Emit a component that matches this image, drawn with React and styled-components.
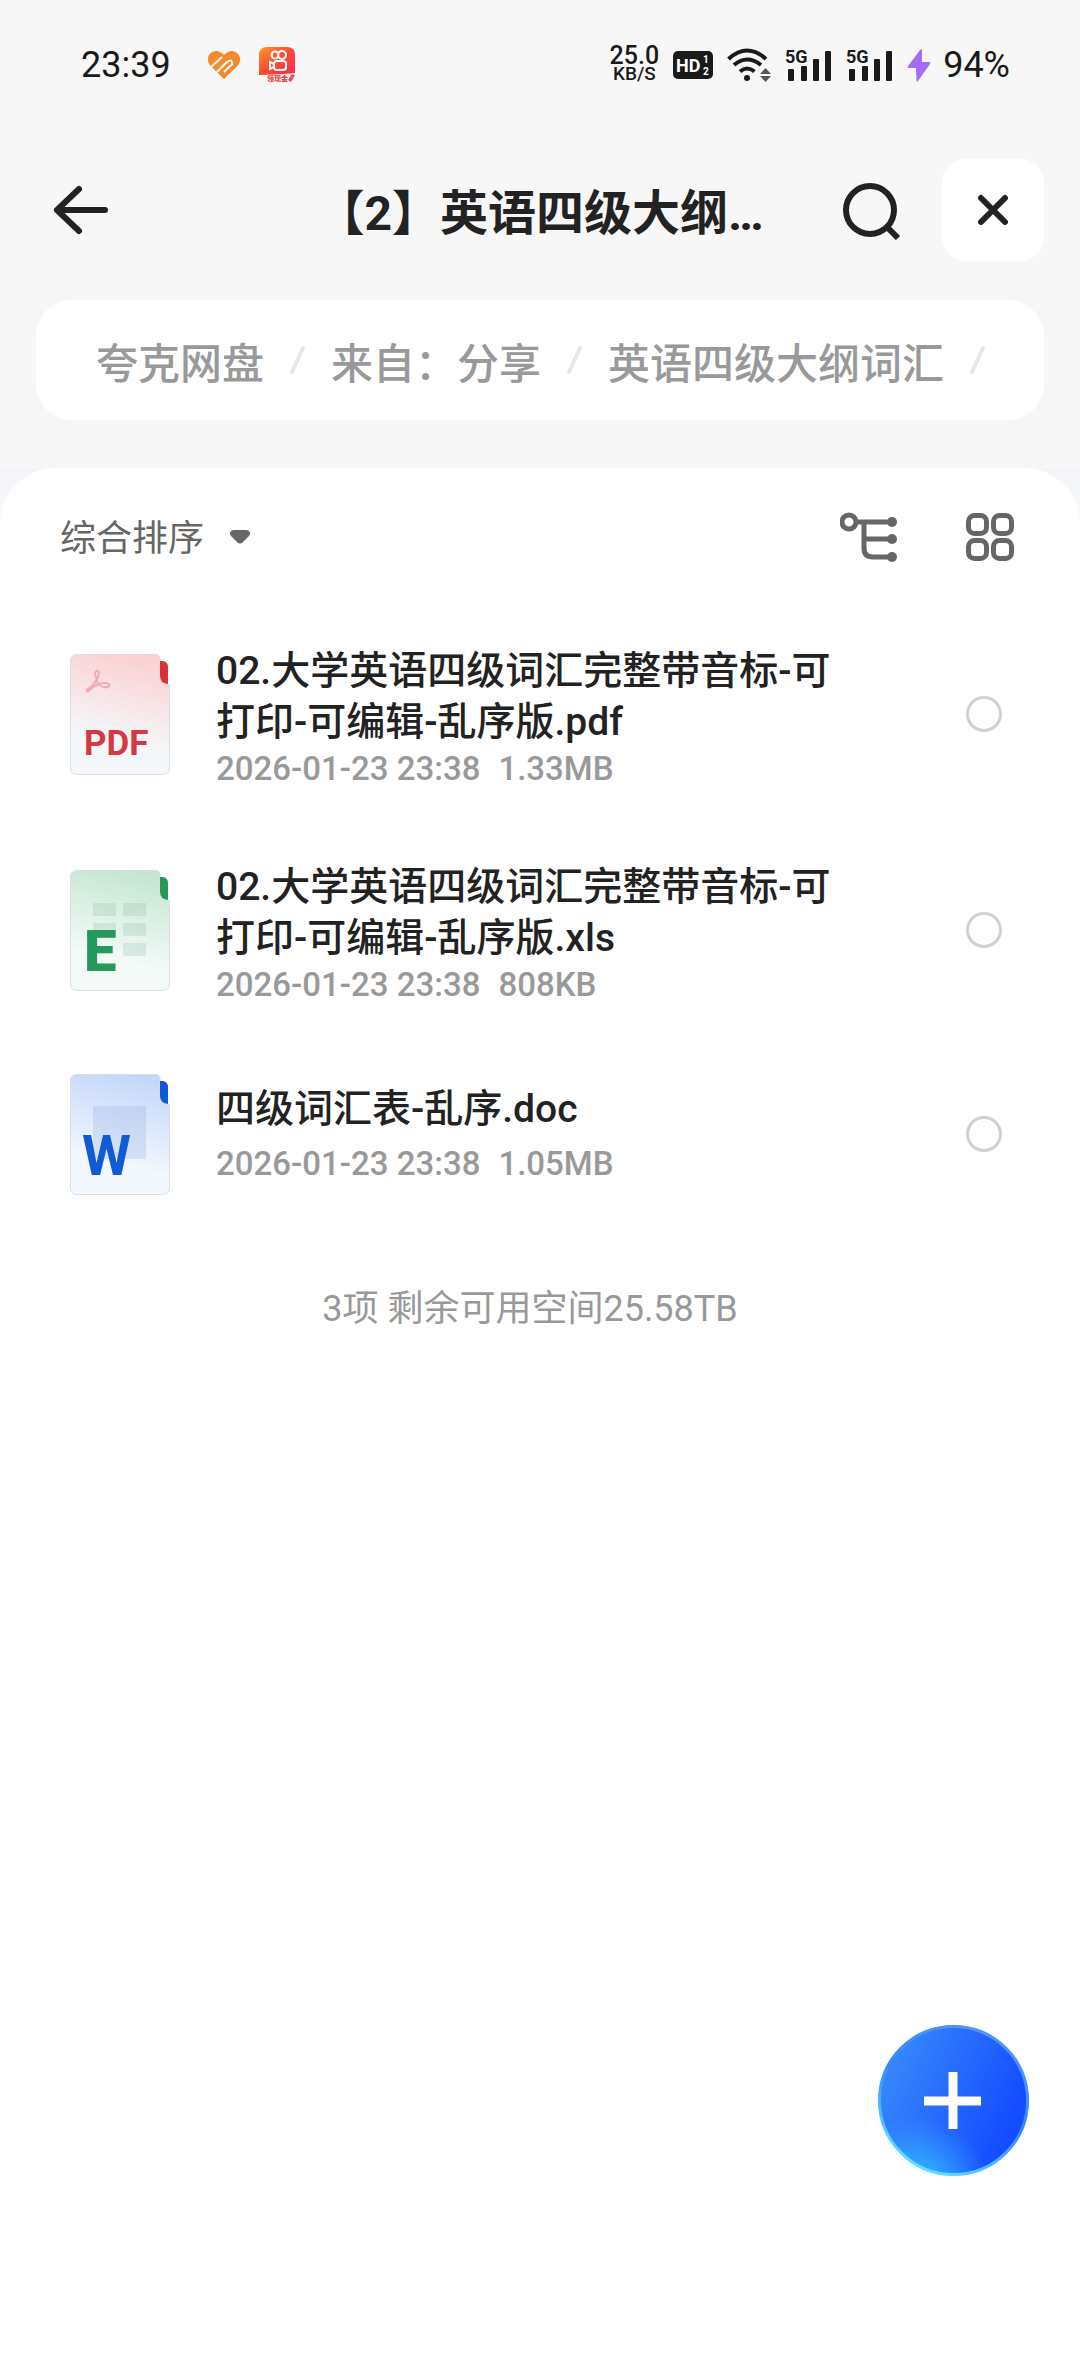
import React, { useState } from 'react';
import styled, { createGlobalStyle } from 'styled-components';

const GlobalStyle = createGlobalStyle`
  * {
    box-sizing: border-box;
  }
  body {
    margin: 0;
    background: #f7f7f7;
    color: #222;
    font-family: Roboto, "Noto Sans CJK SC", sans-serif;
  }
  button {
    padding: 0;
    border: 0;
    background: none;
    color: inherit;
    font: inherit;
    cursor: pointer;
  }
  svg {
    display: block;
    flex: none;
  }
`;

const Screen = styled.div`
  display: flex;
  flex-direction: column;
  min-height: 100vh;
`;

const StatusBar = styled.div`
  display: flex;
  align-items: center;
  justify-content: space-between;
  height: 130px;
  padding: 0 70px 0 81px;
  color: #1a1a1a;
  font-size: 36px;
`;

const StatusGroup = styled.div`
  display: flex;
  align-items: center;
`;

const Apps = styled.div`
  display: flex;
  align-items: center;
  gap: 18px;
  margin-left: 36px;
`;

const Speed = styled.div`
  margin-right: 14px;
  font-size: 25px;
  font-weight: 500;
  line-height: 18px;
  text-align: center;
`;

const SpeedUnit = styled.div`
  font-size: 19px;
  line-height: 18px;
`;

const StatusIcons = styled.div`
  display: flex;
  align-items: center;
  gap: 14px;
  margin-right: 12px;
`;

const Header = styled.header`
  display: grid;
  grid-template-columns: 1fr auto 1fr;
  align-items: center;
  height: 160px;
  padding: 0 36px;
`;

const BackButton = styled.button`
  justify-self: start;
  padding: 0 16px;
`;

const Title = styled.h1`
  margin: 0;
  padding-top: 8px;
  font-size: 48px;
  font-weight: 700;
  line-height: 56px;
  white-space: nowrap;
`;

const HeaderActions = styled.div`
  display: flex;
  align-items: center;
  justify-content: flex-end;
  gap: 40px;
`;

const CloseButton = styled.button`
  display: flex;
  align-items: center;
  justify-content: center;
  width: 102px;
  height: 102px;
  border-radius: 24px;
  background: #fff;
`;

const Breadcrumb = styled.nav`
  display: flex;
  align-items: center;
  gap: 26px;
  height: 120px;
  margin: 10px 36px 48px;
  padding: 0 60px;
  border-radius: 36px;
  background: #fff;
  overflow: hidden;
`;

const Crumb = styled.a`
  color: #999;
  font-size: 42px;
  font-weight: 500;
  text-decoration: none;
  white-space: nowrap;
`;

const SheetBack = styled.div`
  display: flex;
  flex: 1;
  background: linear-gradient(#f3f5f8, #fff 120px);
`;

const Sheet = styled.main`
  flex: 1;
  border-radius: 56px 56px 0 0;
  background: #fff;
`;

const Toolbar = styled.div`
  display: flex;
  align-items: center;
  justify-content: space-between;
  height: 138px;
  padding: 0 66px 0 60px;
  color: #666;
`;

const SortButton = styled.button`
  display: flex;
  align-items: center;
  gap: 26px;
  font-size: 36px;
`;

const SortLabel = styled.span`
  padding-bottom: 4px;
`;

const ViewButtons = styled.div`
  display: flex;
  gap: 68px;
`;

const FileList = styled.ul`
  margin: 0;
  padding: 0;
  list-style: none;
`;

const FileRow = styled.li`
  display: flex;
  align-items: center;
  height: ${({ $compact }) => ($compact ? 192 : 216)}px;
  padding: 0 78px 0 70px;
`;

const FileText = styled.label`
  flex: 1;
  margin: 0 120px 0 46px;
  padding-top: ${({ $compact }) => ($compact ? 0 : 8)}px;
`;

const FileName = styled.div`
  font-size: 39px;
  font-weight: 500;
  line-height: 51px;
  word-break: break-all;
`;

const FileMeta = styled.div`
  display: flex;
  gap: 18px;
  margin-top: ${({ $compact }) => ($compact ? 8 : 0)}px;
  color: #999;
  font-size: 33px;
  font-weight: 500;
  line-height: 42px;
`;

const Radio = styled.input`
  appearance: none;
  width: 36px;
  height: 36px;
  margin: 0;
  border: 3px solid #d0d0d0;
  border-radius: 50%;
  cursor: pointer;

  &:checked {
    border: 10px solid #1a66ff;
  }
`;

const Summary = styled.p`
  margin: 54px 20px 0 0;
  color: #999;
  font-size: 36px;
  line-height: 50px;
  text-align: center;
`;

const AddButton = styled.button`
  position: fixed;
  right: 51px;
  bottom: 200px;
  display: flex;
  align-items: center;
  justify-content: center;
  width: 151px;
  height: 151px;
`;

function HeartIcon() {
  return (
    <svg width="34" height="30" viewBox="0 0 34 30" fill="none">
      <clipPath id="heart">
        <path d="M17 29 3.500 16C-4 7 6-3 14 2.500L17 5l3-2.500C28-3 38 7 30.500 16Z" />
      </clipPath>
      <g clipPath="url(#heart)">
        <rect width="34" height="30" fill="#f58a2c" />
        <path d="M3 18 15 7M8 24 20 12q4-3 5 0t-2 4l-6 6" stroke="#f7f7f7" strokeWidth="2" />
      </g>
    </svg>
  );
}

function VideoAppIcon() {
  return (
    <svg width="38" height="38" viewBox="0 0 38 38">
      <defs>
        <linearGradient id="video" x1="0" y1="0" x2="1" y2="1">
          <stop offset="0" stopColor="#ff9a2a" />
          <stop offset="0.5" stopColor="#fb4a33" />
          <stop offset="1" stopColor="#fa2b50" />
        </linearGradient>
      </defs>
      <path d="M8 1h20q8 0 8 8v19q-18 1-36 1V9q0-8 8-8Z" fill="url(#video)" />
      <g fill="none" stroke="#fff" strokeWidth="2">
        <circle cx="16" cy="9" r="3.500" />
        <circle cx="23" cy="9" r="4" />
        <rect x="15" y="15" width="12" height="9" rx="3" />
        <path d="m15 18-4-2v7l4-2" />
      </g>
      <path d="M3 29q17 0 33-2v2q-1 7-8 7H12q-7-1-9-7Z" fill="#fff4ee" />
      <text x="8" y="35" fontSize="7" fontWeight="700" fill="#d8352f">
        领现金
      </text>
      <path d="m29 34 4-6 3 1-4 7-3-2Z" fill="#ef4b4b" />
    </svg>
  );
}

function HdIcon() {
  return (
    <svg width="40" height="28" viewBox="0 0 40 28">
      <rect width="40" height="28" rx="5" fill="#1a1a1a" />
      <g fill="#fff" fontWeight="700">
        <text x="3" y="21" fontSize="18">
          HD
        </text>
        <text x="30" y="12" fontSize="10">
          1
        </text>
        <text x="30" y="24" fontSize="10">
          2
        </text>
      </g>
    </svg>
  );
}

function WifiIcon() {
  return (
    <svg width="44" height="34" viewBox="0 0 44 34" fill="none">
      <g stroke="#1a1a1a" strokeWidth="4">
        <path d="M1.500 11Q20-6 39 11" />
        <path d="M7 17q13-11 27 0" />
        <path d="M13 23.500q7-6 14.500 0" />
      </g>
      <circle cx="20" cy="30" r="3" fill="#1a1a1a" />
      <path d="m33 26 5.500-6 5.500 6ZM33 28h11l-5.500 6Z" fill="#555" />
    </svg>
  );
}

function SignalIcon() {
  return (
    <svg width="47" height="40" viewBox="0 -4 47 40" fill="#1a1a1a">
      <text x="0" y="14" fontSize="18" fontWeight="700">
        5G
      </text>
      <rect x="3" y="20" width="6" height="12" rx="1" />
      <rect x="16" y="17" width="6" height="15" rx="1" />
      <rect x="28" y="10" width="6" height="22" rx="1" />
      <rect x="40" y="2" width="6" height="30" rx="1" />
    </svg>
  );
}

function BoltIcon() {
  return (
    <svg width="24" height="33" viewBox="0 0 24 33">
      <path
        d="M13.500.500 1 17q-1 2 1 2h7L9.500 32q.500 1 1.500 0L23 15q1-2-1-2h-7V1q-.500-1-1.500-.500Z"
        fill="#a66cf5"
      />
    </svg>
  );
}

function Slash() {
  return (
    <svg width="15" height="28" viewBox="0 0 15 28">
      <path d="M13 2 2 26" stroke="#e6e6e6" strokeWidth="4" strokeLinecap="round" />
    </svg>
  );
}

function BackIcon() {
  return (
    <svg width="58" height="54" viewBox="0 0 58 54" fill="none">
      <path
        d="M27 6 5 27l22 21M5 27h48"
        stroke="#222"
        strokeWidth="6"
        strokeLinecap="round"
        strokeLinejoin="round"
      />
    </svg>
  );
}

function SearchIcon() {
  return (
    <svg width="60" height="60" viewBox="0 0 60 60" fill="none" stroke="#222" strokeWidth="6">
      <circle cx="28" cy="30" r="24" />
      <path d="m44 46 12 12" />
    </svg>
  );
}

function CloseIcon() {
  return (
    <svg width="32" height="32" viewBox="0 0 32 32" fill="none">
      <path d="m4 4 24 24M28 4 4 28" stroke="#222" strokeWidth="6" strokeLinecap="round" />
    </svg>
  );
}

function CaretIcon() {
  return (
    <svg width="20" height="14" viewBox="0 0 20 14">
      <path d="M3 0h14q5 2 2 6l-6 6q-3 3-6 0L1 6Q-2 2 3 0Z" fill="#666" />
    </svg>
  );
}

function TreeIcon() {
  return (
    <svg width="58" height="50" viewBox="0 0 58 50" fill="none" stroke="#666" strokeWidth="5">
      <circle cx="9" cy="10" r="7" />
      <path d="M16 10h36M24 10v26q0 9 9 9h19M24 27h28" />
      <g fill="#666" stroke="none">
        <circle cx="52" cy="10" r="5" />
        <circle cx="52" cy="27" r="5" />
        <circle cx="52" cy="45" r="5" />
      </g>
    </svg>
  );
}

function GridIcon() {
  return (
    <svg width="48" height="48" viewBox="0 0 48 48" fill="none" stroke="#666" strokeWidth="5">
      <rect x="2.500" y="2.500" width="18" height="18" rx="6" />
      <rect x="27.500" y="2.500" width="18" height="18" rx="6" />
      <rect x="2.500" y="27.500" width="18" height="18" rx="6" />
      <rect x="27.500" y="27.500" width="18" height="18" rx="6" />
    </svg>
  );
}

function PlusIcon() {
  return (
    <svg width="151" height="151" viewBox="0 0 151 151">
      <defs>
        <linearGradient id="add" x1="0.100" y1="0.300" x2="0.900" y2="0.650">
          <stop offset="0" stopColor="#3584fb" />
          <stop offset="1" stopColor="#144cff" />
        </linearGradient>
        <radialGradient id="addGlow" cx="0.250" cy="1.100" r="0.500">
          <stop offset="0" stopColor="#35c8ff" />
          <stop offset="0.400" stopColor="#35b8ff" stopOpacity="0.700" />
          <stop offset="1" stopColor="#35a0ff" stopOpacity="0" />
        </radialGradient>
        <linearGradient id="addRim" x1="0.800" y1="0" x2="0.300" y2="1">
          <stop offset="0" stopColor="#5b96f2" />
          <stop offset="0.500" stopColor="#3a86fa" />
          <stop offset="1" stopColor="#62e4ff" />
        </linearGradient>
      </defs>
      <circle cx="75.500" cy="75.500" r="75" fill="url(#add)" />
      <circle cx="75.500" cy="75.500" r="75" fill="url(#addGlow)" />
      <circle cx="75.500" cy="75.500" r="74" fill="none" stroke="url(#addRim)" strokeWidth="3" />
      <path d="M75 47v57M46 76h57" stroke="#fff" strokeWidth="9" />
    </svg>
  );
}

const fileTypes = {
  pdf: { top: '#fbd0d1', bottom: '#f5f8fb', ink: '#d63840', tab: '#dc3237', label: 'PDF', x: 14, size: 35, weight: 700 },
  xls: { top: '#c4e6d0', bottom: '#f3faf8', ink: '#23995a', tab: '#23995a', label: 'E', x: 14, size: 58, weight: 900 },
  doc: { top: '#c3d6fa', bottom: '#f3f7fe', ink: '#115ad6', tab: '#115ad6', label: 'W', x: 12, size: 56, weight: 700 },
};

function FileIcon({ type }) {
  const { top, bottom, ink, tab, label, x, size, weight } = fileTypes[type];
  return (
    <svg width="100" height="121" viewBox="0 0 100 121">
      <defs>
        <linearGradient id={`page-${type}`} x1="0.650" y1="0" x2="0.450" y2="1">
          <stop offset="0" stopColor={top} />
          <stop offset="0.750" stopColor={bottom} />
        </linearGradient>
      </defs>
      <path
        d="M7 .500h79q4 0 4 5v17q0 7 7 8h2.500v83q0 7-7 7H7q-6.500 0-6.500-7V7Q.500.500 7 .500Z"
        fill={`url(#page-${type})`}
        stroke="#d9dfe4"
      />
      <path d="M90 7h3q5 1 5 6v17q-8-1-8-8Z" fill={tab} />
      {type === 'pdf' && (
        <path
          d="M27 17c-4 0-1 8 1 12 2 3 6 5 10 4 3-2 1-4-3-4-6 0-10 2-14 6-3 3-5 3-4 1s4-2 6-5c3-4 6-9 6-12q0-2-2-2Z"
          fill="none"
          stroke="#efaab4"
          strokeWidth="2"
        />
      )}
      {type === 'xls' && (
        <path
          d="M23 33h23v13H23ZM53 33h23v13H53ZM23 53h23v13H23ZM53 53h23v13H53ZM53 73h23v13H53Z"
          fill="#7fb095"
          fillOpacity="0.200"
        />
      )}
      {type === 'doc' && <rect x="23" y="32" width="53" height="53" fill="#8aa7dc" fillOpacity="0.250" />}
      <text x={x} y="101" fill={ink} fontSize={size} fontWeight={weight}>
        {label}
      </text>
    </svg>
  );
}

const crumbs = ['夸克网盘', '来自：分享', '英语四级大纲词汇'];

const files = [
  { type: 'pdf', name: '02.大学英语四级词汇完整带音标-可打印-可编辑-乱序版.pdf', date: '2026-01-23 23:38', size: '1.33MB' },
  { type: 'xls', name: '02.大学英语四级词汇完整带音标-可打印-可编辑-乱序版.xls', date: '2026-01-23 23:38', size: '808KB' },
  { type: 'doc', name: '四级词汇表-乱序.doc', date: '2026-01-23 23:38', size: '1.05MB', compact: true },
];

function App() {
  const [selected, setSelected] = useState(null);

  return (
    <Screen>
      <GlobalStyle />
      <StatusBar>
        <StatusGroup>
          <span>23:39</span>
          <Apps>
            <HeartIcon />
            <VideoAppIcon />
          </Apps>
        </StatusGroup>
        <StatusGroup>
          <Speed>
            25.0
            <SpeedUnit>KB/S</SpeedUnit>
          </Speed>
          <StatusIcons>
            <HdIcon />
            <WifiIcon />
            <SignalIcon />
            <SignalIcon />
            <BoltIcon />
          </StatusIcons>
          <span>94%</span>
        </StatusGroup>
      </StatusBar>

      <Header>
        <BackButton aria-label="返回">
          <BackIcon />
        </BackButton>
        <Title>【2】英语四级大纲…</Title>
        <HeaderActions>
          <button aria-label="搜索">
            <SearchIcon />
          </button>
          <CloseButton aria-label="关闭">
            <CloseIcon />
          </CloseButton>
        </HeaderActions>
      </Header>

      <Breadcrumb>
        {crumbs.map((crumb) => (
          <React.Fragment key={crumb}>
            <Crumb href="#">{crumb}</Crumb>
            <Slash />
          </React.Fragment>
        ))}
      </Breadcrumb>

      <SheetBack>
        <Sheet>
          <Toolbar>
            <SortButton>
              <SortLabel>综合排序</SortLabel>
              <CaretIcon />
            </SortButton>
            <ViewButtons>
              <button aria-label="目录树">
                <TreeIcon />
              </button>
              <button aria-label="网格视图">
                <GridIcon />
              </button>
            </ViewButtons>
          </Toolbar>
          <FileList>
            {files.map(({ type, name, date, size, compact }) => (
              <FileRow key={type} $compact={compact}>
                <FileIcon type={type} />
                <FileText htmlFor={`file-${type}`} $compact={compact}>
                  <FileName>{name}</FileName>
                  <FileMeta $compact={compact}>
                    <span>{date}</span>
                    <span>{size}</span>
                  </FileMeta>
                </FileText>
                <Radio
                  type="radio"
                  name="file"
                  id={`file-${type}`}
                  checked={selected === type}
                  onChange={() => setSelected(type)}
                />
              </FileRow>
            ))}
          </FileList>
          <Summary>3项 剩余可用空间25.58TB</Summary>
        </Sheet>
      </SheetBack>

      <AddButton aria-label="新建">
        <PlusIcon />
      </AddButton>
    </Screen>
  );
}

export default App;
